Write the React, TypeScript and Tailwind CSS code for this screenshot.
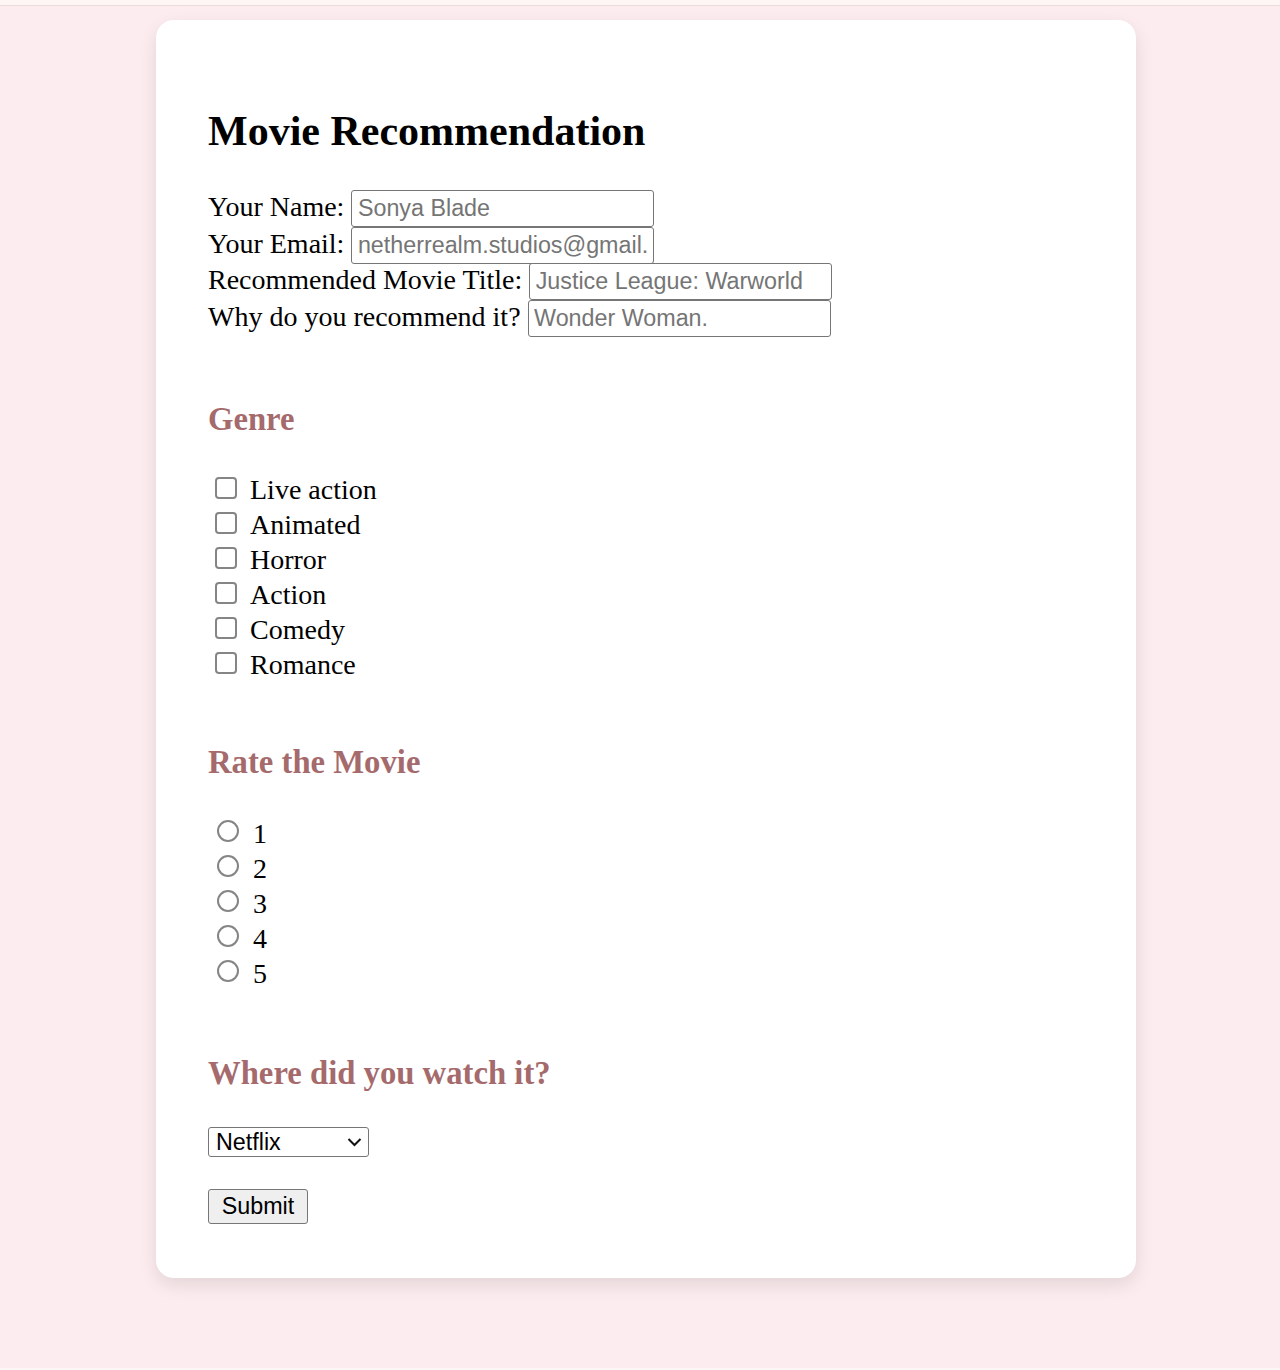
import { useState } from "react";

const serif = "font-['Liberation_Serif','Times_New_Roman',serif]";
const sans = "font-['Liberation_Sans',Arial,sans-serif]";

const fields = [
  { label: "Your Name:", placeholder: "Sonya Blade", type: "text" },
  { label: "Your Email:", placeholder: "netherrealm.studios@gmail.com", type: "email" },
  { label: "Recommended Movie Title:", placeholder: "Justice League: Warworld", type: "text" },
  { label: "Why do you recommend it?", placeholder: "Wonder Woman.", type: "text" },
];

const genres = ["Live action", "Animated", "Horror", "Action", "Comedy", "Romance"];
const ratings = ["1", "2", "3", "4", "5"];

export default function App() {
  const [platform, setPlatform] = useState("netflix");

  return (
    <div className={`min-h-screen bg-[#fcecef] ${serif} text-black`}>
      {/* thin strip at the very top */}
      <div className="h-[5px] bg-[#fdf6f4] border-b border-[#ecdcdc] box-content" />

      <div className="h-[1362px] pt-[14px]">
        <form
          onSubmit={(e) => e.preventDefault()}
          className="ml-[156px] w-[980px] bg-white rounded-[18px] shadow-[0_7px_18px_rgba(0,0,0,0.1)] px-[52px] pt-[52px] pb-[54px]"
        >
          <h1 className="mt-[35px] mb-[35px] text-[42px] leading-[48px] font-bold">Movie Recommendation</h1>

          <div className="flex flex-col">
            {fields.map((f) => (
              <div key={f.label} className="flex items-baseline gap-[7px] h-[36.67px] text-[28px] leading-[32px]">
                <label>{f.label}</label>
                <input
                  type={f.type}
                  placeholder={f.placeholder}
                  className={`${sans} w-[303px] h-[37px] border-[1.5px] border-[#767676] rounded-[3px] px-[5.5px] text-[23.3px] leading-[27px] bg-white placeholder:text-[#757575] outline-none`}
                />
              </div>
            ))}
          </div>

          <h3 className="mt-[63px] text-[32.7px] leading-[38px] font-bold text-[#a56a6c]">Genre</h3>
          <div className="mt-[34px] flex flex-col">
            {genres.map((g) => (
              <label key={g} className="flex items-start h-[35px] text-[28px] leading-[35px]">
                <input
                  type="checkbox"
                  className="appearance-none m-0 ml-[7px] mt-[5px] w-[22px] h-[22px] shrink-0 border-2 border-[#858585] rounded-[4px] bg-white checked:bg-[#0075ff] checked:border-[#0075ff]"
                />
                <span className="ml-[13px]">{g}</span>
              </label>
            ))}
          </div>

          <h3 className="mt-[61px] text-[32.7px] leading-[38px] font-bold text-[#a56a6c]">Rate the Movie</h3>
          <div className="mt-[35px] flex flex-col">
            {ratings.map((r) => (
              <label key={r} className="flex items-start h-[35px] text-[28px] leading-[35px]">
                <input
                  type="radio"
                  name="rating"
                  value={r}
                  className="appearance-none m-0 ml-[9px] mt-[4.5px] w-[22px] h-[22px] shrink-0 border-2 border-[#858585] rounded-full bg-white checked:border-[6px] checked:border-[#0075ff]"
                />
                <span className="ml-[14px]">{r}</span>
              </label>
            ))}
          </div>

          <h3 className="mt-[63px] text-[32.7px] leading-[38px] font-bold text-[#a56a6c]">Where did you watch it?</h3>
          <div className="mt-[35px] relative w-[161px] h-[30px]">
            <select
              value={platform}
              onChange={(e) => setPlatform(e.target.value)}
              className={`${sans} appearance-none w-[161px] h-[30px] border-[1.5px] border-[#767676] rounded-[3px] pl-[7px] text-[23.3px] leading-[26px] bg-white text-black outline-none`}
            >
              <option value="netflix">Netflix</option>
              <option value="prime">Prime Video</option>
              <option value="disney">Disney+</option>
              <option value="hbo">HBO Max</option>
              <option value="cinema">Cinema</option>
            </select>
            <svg
              className="absolute right-[7px] top-[10px] pointer-events-none"
              width="15"
              height="10"
              viewBox="0 0 15 10"
              fill="none"
            >
              <path d="M1.5 2 L7.5 8 L13.5 2" stroke="#111" strokeWidth="2" />
            </svg>
          </div>

          <button
            type="submit"
            className={`${sans} mt-[32px] block w-[100px] h-[35px] bg-[#efefef] border-[1.5px] border-[#767676] rounded-[3px] text-[23.3px] leading-[26px] text-black`}
          >
            Submit
          </button>
        </form>
      </div>
      <div className="h-[2px] bg-[#fdf6f6]" />
    </div>
  );
}
